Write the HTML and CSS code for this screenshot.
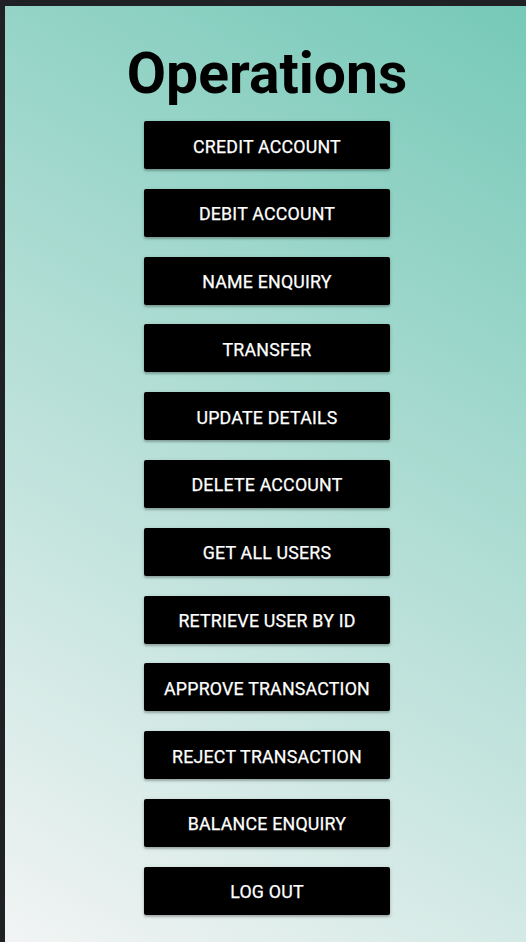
FILE: index.html
```html
<!DOCTYPE html>
<html>
<head>
<meta charset="utf-8">
<link rel="stylesheet" href="styles.css">
</head>
<body>
<div class="frame">
  <main class="page">
    <h1 class="title">Operations</h1>
    <nav class="ops">
      <button class="op">CREDIT ACCOUNT</button>
      <button class="op">DEBIT ACCOUNT</button>
      <button class="op">NAME ENQUIRY</button>
      <button class="op">TRANSFER</button>
      <button class="op">UPDATE DETAILS</button>
      <button class="op">DELETE ACCOUNT</button>
      <button class="op">GET ALL USERS</button>
      <button class="op">RETRIEVE USER BY ID</button>
      <button class="op">APPROVE TRANSACTION</button>
      <button class="op">REJECT TRANSACTION</button>
      <button class="op">BALANCE ENQUIRY</button>
      <button class="op">LOG OUT</button>
    </nav>
  </main>
</div>
</body>
</html>
```
FILE: styles.css
```css
html, body {
  margin: 0;
  padding: 0;
  height: 100%;
}
body {
  background: #202124;
  font-family: Roboto, "Liberation Sans", sans-serif;
}
.frame {
  box-sizing: border-box;
  height: 942px;
  padding: 6px 0 0 5px;
  background: #202124;
}
.page {
  box-sizing: border-box;
  height: 100%;
  background: linear-gradient(30deg, #f2f4f4 0%, #76c9b8 100%);
  display: flex;
  flex-direction: column;
  align-items: center;
  padding-left: 3px;
}
.title {
  margin: 33px 0 0 0;
  font-size: 57px;
  line-height: 70px;
  font-weight: 700;
  color: #000;
}
.ops {
  display: flex;
  flex-direction: column;
  gap: 19.8px;
  margin-top: 12px;
}
.op {
  width: 246px;
  height: 48px;
  border: none;
  border-radius: 2px;
  background: #000;
  color: #fff;
  font-family: Roboto, "Liberation Sans", sans-serif;
  font-size: 17.8px;
  font-weight: 400;
  letter-spacing: 0.2px;
  -webkit-text-stroke: 0.25px #fff;
  box-shadow: 0 2px 2px rgba(0,0,0,0.2), 0 1px 4px rgba(0,0,0,0.15);
  padding: 2px 0 0 0;
  cursor: pointer;
}
```
